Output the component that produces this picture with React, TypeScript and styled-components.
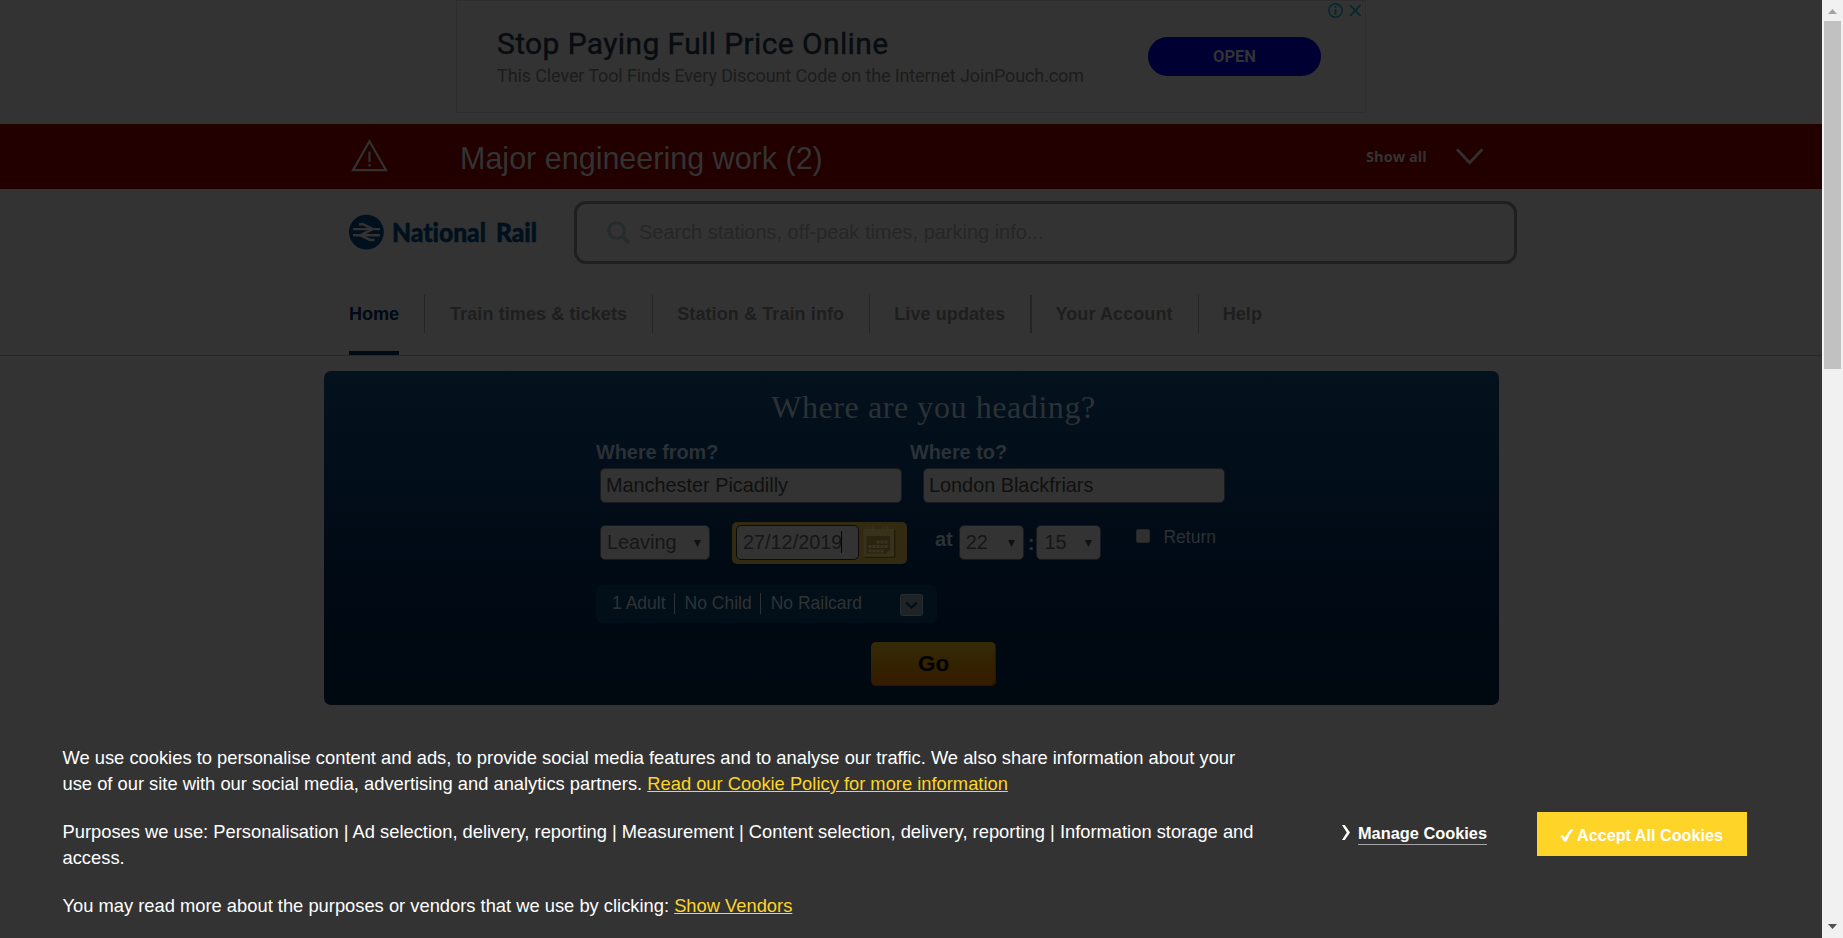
import React from 'react';
import styled, { createGlobalStyle } from 'styled-components';

const sans = `"Liberation Sans", Arial, sans-serif`;

const GlobalStyle = createGlobalStyle`
  *, *::before, *::after { box-sizing: border-box; }
  body { margin: 0; background: #333; font-family: ${sans}; overflow: hidden; }
  p, h1, h2, h3 { margin: 0; font-weight: 400; }
`;

const Window = styled.div`
  display: flex;
  width: 1843px;
  height: 938px;
`;

const Page = styled.div`
  display: flex;
  flex-direction: column;
  width: 1822px;
  height: 938px;
  background: #333;
`;

const AdSlot = styled.aside`
  height: 124px;
  padding-left: 456px;
`;

const Ad = styled.div`
  position: relative;
  display: flex;
  justify-content: space-between;
  width: 910px;
  height: 113px;
  padding: 25px 44px 0 40px;
  border: 1px solid #2d2d2d;
  font-family: Roboto, sans-serif;
`;

const AdTitle = styled.h2`
  font-size: 30px;
  line-height: 35px;
  letter-spacing: 0.38px;
  color: #080c10;
  font-weight: 400;
  -webkit-text-stroke: 0.4px #080c10;
  white-space: nowrap;
`;

const AdText = styled.p`
  margin-top: 3px;
  font-size: 18px;
  line-height: 24px;
  letter-spacing: -0.115px;
  color: #1c1c1c;
  white-space: nowrap;
`;

const AdButton = styled.div`
  width: 173px;
  height: 39px;
  margin-top: 11px;
  border-radius: 20px;
  background: #000033;
  color: #333;
  font-size: 16.5px;
  font-weight: 700;
  line-height: 39px;
  text-align: center;
`;

const AdMarks = styled.svg`
  position: absolute;
  top: 1px;
  right: 2px;
`;

const AlertBar = styled.section`
  display: flex;
  align-items: center;
  height: 65px;
  padding-left: 351px;
  background: #220000;
  color: #333;
`;

const Warning = styled.svg`
  display: block;
  margin-bottom: 2px;
`;

const AlertTitle = styled.h2`
  width: 906px;
  margin-left: 72px;
  padding-top: 2px;
  font-size: 30.5px;
  line-height: 36px;
`;

const ShowAll = styled.span`
  width: 89px;
  padding-bottom: 2px;
  font-family: "Open Sans", sans-serif;
  font-size: 14.6px;
  font-weight: 700;
  line-height: 20px;
`;

const Header = styled.header`
  height: 167px;
  padding: 12px 0 0 349px;
  border-bottom: 1px solid #282828;
`;

const HeaderTop = styled.div`
  display: flex;
  align-items: center;
  height: 63px;
`;

const Logo = styled.svg`
  display: block;
  width: 225px;
  height: 40px;
  margin-bottom: 2px;
  font-family: Lato, sans-serif;
  font-size: 26px;
  font-weight: 900;
  font-variant-ligatures: none;
`;

const SearchBox = styled.div`
  display: flex;
  align-items: center;
  gap: 9px;
  width: 943px;
  height: 63px;
  padding-left: 30px;
  border: 3px solid #1f1f1f;
  border-radius: 12px;
  color: #262626;
  font-size: 19.97px;
`;

const Nav = styled.nav`
  display: flex;
  height: 60px;
  margin-top: 31px;
`;

const NavItem = styled.div<{ $active?: boolean }>`
  height: 60px;
  font-size: 18px;
  font-weight: 700;
  letter-spacing: ${(p) => (p.$active ? 0 : 0.1)}px;
  line-height: 38px;
  white-space: nowrap;
  color: ${(p) => (p.$active ? '#000a17' : '#1e1e1e')};
  border-bottom: ${(p) => (p.$active ? '4px solid #000a14' : 'none')};
`;

const NavRule = styled.div<{ $wide?: boolean; $after: number }>`
  width: ${(p) => (p.$wide ? 2 : 1)}px;
  height: 38px;
  margin: 0 ${(p) => p.$after}px 0 25px;
  background: #242424;
`;

const Planner = styled.main`
  width: 1175px;
  height: 334px;
  margin: 15px 0 0 324px;
  padding: 17px 0 0 272px;
  border-radius: 7px;
  background: linear-gradient(#04121d 0, #020e1a 90px, #000a15 200px, #000810 100%);
  color: #2b3136;
`;

const PlannerTitle = styled.h1`
  width: 675px;
  font-family: "Liberation Serif", serif;
  font-size: 32px;
  letter-spacing: 0.58px;
  line-height: 38px;
  text-align: center;
`;

const Labels = styled.div`
  display: flex;
  height: 42px;
  padding-top: 14px;
  font-size: 19.85px;
  font-weight: 700;
  line-height: 24px;
`;

const Label = styled.label`
  width: 314px;
`;

const Stations = styled.div`
  display: flex;
  gap: 21px;
  padding-left: 4px;
`;

const Field = styled.div<{ $w: number; $focus?: boolean; $indent?: number }>`
  display: flex;
  align-items: center;
  justify-content: space-between;
  flex-shrink: 0;
  width: ${(p) => p.$w}px;
  height: 35px;
  padding: 0 8px 2px ${(p) => p.$indent ?? 6}px;
  border: 1px solid ${(p) => (p.$focus ? '#0b0b0b' : '#181b1e')};
  border-radius: 5px;
  background: #333;
  color: ${(p) => (p.$w > 200 ? '#101010' : '#161616')};
  font-size: 19.85px;
  line-height: 32px;
  white-space: nowrap;
`;

const TimeRow = styled.div`
  display: flex;
  align-items: flex-start;
  height: 42px;
  margin-top: 19px;
  padding-left: 4px;
`;

const Slot = styled.div<{ $left?: number; $top?: number }>`
  margin: ${(p) => p.$top ?? 3}px 0 0 ${(p) => p.$left ?? 0}px;
`;

const DateBox = styled.div`
  display: flex;
  width: 175px;
  height: 42px;
  margin-left: 22px;
  padding: 3px 0 0 4px;
  border-radius: 5px;
  background: #332b11;
`;

const Caret = styled.i`
  display: inline-block;
  width: 1px;
  height: 22px;
  margin-left: -1px;
  background: #050505;
  vertical-align: -4px;
`;

const Triangle = styled.svg`
  display: block;
  margin-top: 4px;
`;

const Bold = styled.span`
  font-size: 20px;
  font-weight: 700;
  line-height: 24px;
`;

const Checkbox = styled.span`
  display: block;
  width: 14px;
  height: 14px;
  border: 1px solid #262626;
  border-radius: 2px;
  background: #303030;
`;

const Small = styled.span`
  display: block;
  font-size: 17.5px;
  line-height: 20px;
`;

const Passengers = styled.div`
  display: flex;
  align-items: center;
  width: 341px;
  height: 38px;
  margin-top: 21px;
  padding: 0 14px 0 16px;
  border-radius: 6px;
  background: #020f18;
  color: #2f3336;
  font-size: 17.5px;
  white-space: nowrap;
`;

const PassengerItem = styled.span`
  margin-top: -2px;
  padding: 0 8px 0 10px;
  border-right: 1px solid #2d3235;
  line-height: 21px;
  &:first-child { padding-left: 0; }
  &:last-of-type { border: 0; }
`;

const Expander = styled.svg`
  margin: 2px 0 0 auto;
`;

const GoButton = styled.div`
  width: 125px;
  height: 44px;
  margin: 19px 0 0 275px;
  border-radius: 5px;
  background: linear-gradient(#332b0a, #332200 55%, #331b00);
  box-shadow: inset -1px -1px 1px #331300;
  color: #000;
  font-size: 22.5px;
  font-weight: 700;
  line-height: 43px;
  text-align: center;
`;

const CookieBanner = styled.footer`
  display: flex;
  align-items: flex-start;
  height: 233px;
  padding: 40px 0 0 62.5px;
  background: #333;
  color: #fff;
`;

const CookieCopy = styled.div`
  display: flex;
  flex-direction: column;
  gap: 22px;
  width: 1198px;
  font-size: 18.33px;
  line-height: 26px;
`;

const YellowLink = styled.a`
  color: #ffd428;
  text-decoration: underline;
`;

const Manage = styled.div`
  display: flex;
  align-items: flex-start;
  gap: 8px;
  margin: 80px 0 0 81.5px;
`;

const ManageLabel = styled.span`
  height: 20px;
  border-bottom: 1px solid #a5a5a5;
  font-size: 16.35px;
  font-weight: 700;
  line-height: 17px;
  white-space: nowrap;
`;

const Accept = styled.div`
  display: flex;
  align-items: center;
  gap: 3px;
  width: 210px;
  height: 44px;
  margin: 67px 0 0 50px;
  padding: 3px 0 0 23px;
  background: #ffd428;
  font-size: 16.2px;
  font-weight: 700;
  white-space: nowrap;
`;

const Scrollbar = styled.div`
  display: flex;
  flex-direction: column;
  align-items: center;
  width: 21px;
  height: 938px;
  background: #f1f1f1;
`;

const Thumb = styled.div`
  width: 17px;
  height: 348px;
  margin-bottom: auto;
  background: #c1c1c1;
`;

const Arrow = () => (
  <Triangle width="7" height="7" viewBox="0 0 7 7">
    <path d="M0 0h7L3.5 7z" fill="#101010" />
  </Triangle>
);

const navItems = ['Home', 'Train times & tickets', 'Station & Train info', 'Live updates', 'Your Account', 'Help'];
const ruleAfter = [0, 25, 24, 24, 23, 24];

export default function App() {
  return (
    <Window>
      <GlobalStyle />
      <Page>
        <AdSlot>
          <Ad>
            <div>
              <AdTitle>Stop Paying Full Price Online</AdTitle>
              <AdText>This Clever Tool Finds Every Discount Code on the Internet JoinPouch.com</AdText>
            </div>
            <AdButton>OPEN</AdButton>
            <AdMarks width="36" height="17" viewBox="0 0 36 17" fill="none" stroke="#00272f" strokeWidth="1.4">
              <circle cx="8.5" cy="8.5" r="6.7" />
              <path d="M8.5 7.2v5.3M8.5 4v1.8" strokeWidth="1.8" />
              <path d="M23 3l10.500 11M33.500 3l-10.500 11" strokeWidth="1.6" />
            </AdMarks>
          </Ad>
        </AdSlot>

        <AlertBar>
          <Warning width="37" height="34" viewBox="0 0 37 34" fill="none" stroke="#33302f">
            <path d="M18.5 2.2L35 31.2H2z" strokeWidth="2.2" />
            <path d="M18.5 12.5v10.5M18.5 25v2.5" strokeWidth="2.2" />
          </Warning>
          <AlertTitle>Major engineering work (2)</AlertTitle>
          <ShowAll>Show all</ShowAll>
          <svg width="30" height="18" viewBox="0 0 30 18" fill="none" stroke="#332f2f" strokeWidth="2.8">
            <path d="M2 1.2L14.6 14.6L27.4 1.2" />
          </svg>
        </AlertBar>

        <Header>
          <HeaderTop>
            <Logo viewBox="0 0 225 40">
              <circle cx="17.4" cy="20.1" r="17.4" fill="#00101d" />
              <g fill="none" stroke="#333" strokeWidth="2.4">
                <path d="M4 17.1H31M4 23.3H31" />
                <path d="M10 12.2H14L23.5 17.1L11.5 23.3L21 28H25.5" strokeWidth="2.6" />
              </g>
              <g fill="#00101d" stroke="#00101d" strokeWidth="0.5">
                <text x="43" y="29.5" textLength="94" lengthAdjust="spacingAndGlyphs">National</text>
                <text x="147" y="29.5" textLength="41" lengthAdjust="spacingAndGlyphs">Rail</text>
              </g>
            </Logo>
            <SearchBox>
              <svg width="23" height="23" viewBox="0 0 23 23" fill="none" stroke="#262b2d" strokeWidth="3">
                <circle cx="9.6" cy="9.6" r="7.8" />
                <path d="M15 15l7 7" strokeWidth="3.6" />
              </svg>
              Search stations, off-peak times, parking info...
            </SearchBox>
          </HeaderTop>
          <Nav>
            {navItems.map((item, i) => (
              <React.Fragment key={item}>
                {i > 0 && <NavRule $wide={i === 4} $after={ruleAfter[i]} />}
                <NavItem $active={i === 0}>{item}</NavItem>
              </React.Fragment>
            ))}
          </Nav>
        </Header>

        <Planner>
          <PlannerTitle>Where are you heading?</PlannerTitle>
          <Labels>
            <Label>Where from?</Label>
            <Label>Where to?</Label>
          </Labels>
          <Stations>
            <Field $w={302} $indent={5}>Manchester Picadilly</Field>
            <Field $w={302} $indent={5}>London Blackfriars</Field>
          </Stations>
          <TimeRow>
            <Slot>
              <Field $w={110}>Leaving<Arrow /></Field>
            </Slot>
            <DateBox>
              <Field $w={123} $focus><span>27/12/2019<Caret /></span></Field>
              <svg width="37" height="34" viewBox="0 0 37 34">
                <path d="M5.500 5h31v28h-31z" fill="#221d0c" />
                <path d="M4.500 4h30.500v27.700h-30.500z" fill="#38321d" />
                <path d="M7.500 11h23.500v13l-4 4.500h-19.500z" fill="#2a230e" />
                <path d="M10 1.500v5M13.500 1.500v5M24.500 1.500v5M28 1.500v5" stroke="#3a341f" strokeWidth="1.300" />
                <g fill="#3a3522">
                  <path d="M17.500 15.500h3v3h-3zM21.500 15.500h3v3h-3zM25.500 15.500h3v3h-3zM9.500 20h3v3h-3zM13.500 20h3v3h-3zM17.500 20h3v3h-3zM21.500 20h3v3h-3zM25.500 20h3v3h-3zM9.500 24.500h3v3h-3zM13.500 24.500h3v3h-3zM17.500 24.500h3v3h-3zM21.500 24.500h3v3h-3z" />
                </g>
              </svg>
            </DateBox>
            <Slot $left={28} $top={5}><Bold>at</Bold></Slot>
            <Slot $left={6}><Field $w={65}>22<Arrow /></Field></Slot>
            <Slot $left={4} $top={9}><Bold>:</Bold></Slot>
            <Slot $left={2}><Field $w={65} $indent={7}>15<Arrow /></Field></Slot>
            <Slot $left={35} $top={7}><Checkbox /></Slot>
            <Slot $left={13} $top={5}><Small>Return</Small></Slot>
          </TimeRow>
          <Passengers>
            <PassengerItem>1 Adult</PassengerItem>
            <PassengerItem>No Child</PassengerItem>
            <PassengerItem>No Railcard</PassengerItem>
            <Expander width="23" height="22" viewBox="0 0 23 22" fill="none">
              <rect x="0.5" y="0.5" width="22" height="21" rx="2" fill="#1e2327" stroke="#282c30" />
              <path d="M6 8.500l5.500 5l5.500-5" stroke="#040c1a" strokeWidth="2.200" />
            </Expander>
          </Passengers>
          <GoButton>Go</GoButton>
        </Planner>

        <CookieBanner>
          <CookieCopy>
            <p>
              We use cookies to personalise content and ads, to provide social media features and to analyse our
              traffic. We also share information about your use of our site with our social media, advertising and
              analytics partners. <YellowLink>Read our Cookie Policy for more information</YellowLink>
            </p>
            <p>
              Purposes we use: Personalisation | Ad selection, delivery, reporting | Measurement | Content selection,
              delivery, reporting | Information storage and access.
            </p>
            <p>
              You may read more about the purposes or vendors that we use by clicking:{' '}
              <YellowLink>Show Vendors</YellowLink>
            </p>
          </CookieCopy>
          <Manage>
            <svg width="8" height="15" viewBox="0 0 8 15" fill="#fff">
              <path d="M0 0h2.800L8 7.500L2.800 15H0L4.800 7.500z" />
            </svg>
            <ManageLabel>Manage Cookies</ManageLabel>
          </Manage>
          <Accept>
            <svg width="14" height="13" viewBox="0 0 14 13" fill="#fff">
              <path d="M0.300 7.200L2.800 6L5 8.800Q7.500 3.500 10.500 0.500H13.500Q9 5.500 6.500 12.500H4Q2.500 9.500 0.300 7.200z" />
            </svg>
            Accept All Cookies
          </Accept>
        </CookieBanner>
      </Page>

      <Scrollbar>
        <svg width="21" height="21" viewBox="0 0 21 21">
          <path d="M6 14h9L10.500 9z" fill="#a3a3a3" />
        </svg>
        <Thumb />
        <svg width="21" height="21" viewBox="0 0 21 21">
          <path d="M6 7h9l-4.500 5z" fill="#505050" />
        </svg>
      </Scrollbar>
    </Window>
  );
}
